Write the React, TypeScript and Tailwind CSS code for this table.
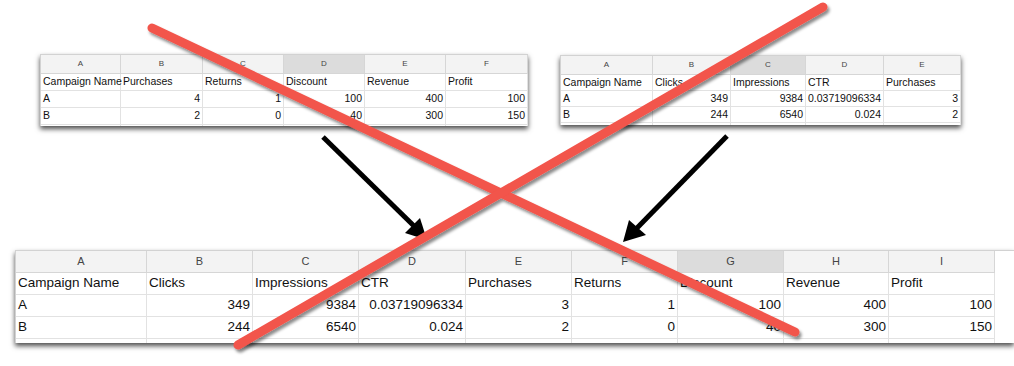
import React from 'react';

type Cell = string | number;

interface SheetProps {
  grid: string;
  letters: string[];
  active: number;
  rows: Cell[][];
  headH: string;
  rowH: string;
  tailH: string;
  text: string;
  headText: string;
}

const Sheet: React.FC<SheetProps> = ({ grid, letters, active, rows, headH, rowH, tailH, text, headText }) => {
  return (
    <div className={`grid ${grid} bg-white border-l border-t border-[#d2d2d2] shadow-[0_3px_5px_rgba(0,0,0,0.7)]`}>
      {/* Column letters */}
      {letters.map((l, i) => (
        <div
          key={`h-${l}`}
          className={`${headH} ${headText} flex items-center justify-center text-[#444] border-r border-b border-[#d6d6d6] ${
            i === active ? 'bg-[#dcdcdc]' : 'bg-[#f3f3f3]'
          }`}
        >
          {l}
        </div>
      ))}

      {/* Data rows */}
      {rows.map((row, r) =>
        row.map((cell, c) => (
          <div
            key={`c-${r}-${c}`}
            className={`${rowH} ${text} flex items-center px-[2px] whitespace-nowrap text-[#111] border-r border-b border-[#e2e2e2] ${
              typeof cell === 'number' ? 'justify-end' : 'justify-start'
            }`}
          >
            {cell}
          </div>
        ))
      )}

      {/* Partially visible next row */}
      {letters.map((l) => (
        <div key={`t-${l}`} className={`${tailH} border-r border-[#e2e2e2]`} />
      ))}
    </div>
  );
};

const App: React.FC = () => {
  return (
    <div className="relative w-[1014px] h-[366px] bg-white overflow-hidden font-['Liberation_Sans',Arial,sans-serif]">
      {/* Source sheets */}
      <div className="h-[125px] flex items-start pl-[40px] pt-[54px] gap-[32px]">
        <Sheet
          grid="grid-cols-[80px_82px_81px_81px_81px_82px]"
          letters={['A', 'B', 'C', 'D', 'E', 'F']}
          active={3}
          rows={[
            ['Campaign Name', 'Purchases', 'Returns', 'Discount', 'Revenue', 'Profit'],
            ['A', 4, 1, 100, 400, 100],
            ['B', 2, 0, 40, 300, 150],
          ]}
          headH="h-[19px]"
          rowH="h-[17px]"
          tailH="h-px"
          text="text-[10.5px]"
          headText="text-[8px]"
        />
        <div className="mt-px">
          <Sheet
            grid="grid-cols-[92px_78px_75px_78px_77px]"
            letters={['A', 'B', 'C', 'D', 'E']}
            active={2}
            rows={[
              ['Campaign Name', 'Clicks', 'Impressions', 'CTR', 'Purchases'],
              ['A', 349, 9384, 0.03719096334, 3],
              ['B', 244, 6540, 0.024, 2],
            ]}
            headH="h-[19px]"
            rowH="h-[16px]"
            tailH="h-[2px]"
            text="text-[10.5px]"
            headText="text-[8px]"
          />
        </div>
      </div>

      {/* Merge arrows */}
      <svg width="1014" height="125" viewBox="0 0 1014 125" className="block">
        <line x1="323" y1="12" x2="414" y2="101" stroke="#000" strokeWidth="5" />
        <polygon points="427,115 405,108 420,93" fill="#000" />
        <line x1="727" y1="11" x2="637" y2="103" stroke="#000" strokeWidth="5" />
        <polygon points="623,117 629,95 646,110" fill="#000" />
      </svg>

      {/* Merged sheet */}
      <div className="pl-[15px]">
        <Sheet
          grid="grid-cols-[131px_106px_106px_107px_106px_106px_106px_105px_106px]"
          letters={['A', 'B', 'C', 'D', 'E', 'F', 'G', 'H', 'I']}
          active={6}
          rows={[
            ['Campaign Name', 'Clicks', 'Impressions', 'CTR', 'Purchases', 'Returns', 'Discount', 'Revenue', 'Profit'],
            ['A', 349, 9384, 0.03719096334, 3, 1, 100, 400, 100],
            ['B', 244, 6540, 0.024, 2, 0, 40, 300, 150],
          ]}
          headH="h-[22px]"
          rowH="h-[22px]"
          tailH="h-[4px]"
          text="text-[13.5px]"
          headText="text-[11px]"
        />
      </div>

      {/* Red cross drawn over everything */}
      <svg
        width="1014"
        height="366"
        viewBox="0 0 1014 366"
        className="absolute inset-0 pointer-events-none"
      >
        <defs>
          <filter id="xshadow" x="-10%" y="-10%" width="120%" height="120%">
            <feDropShadow dx="2" dy="3" stdDeviation="1.5" floodColor="#000" floodOpacity="0.45" />
          </filter>
        </defs>
        <g filter="url(#xshadow)" stroke="#f2544b" strokeWidth="9" strokeLinecap="round">
          <line x1="152" y1="28" x2="795" y2="332" />
          <line x1="823" y1="7" x2="238" y2="345" />
        </g>
      </svg>
    </div>
  );
};

export default App;
